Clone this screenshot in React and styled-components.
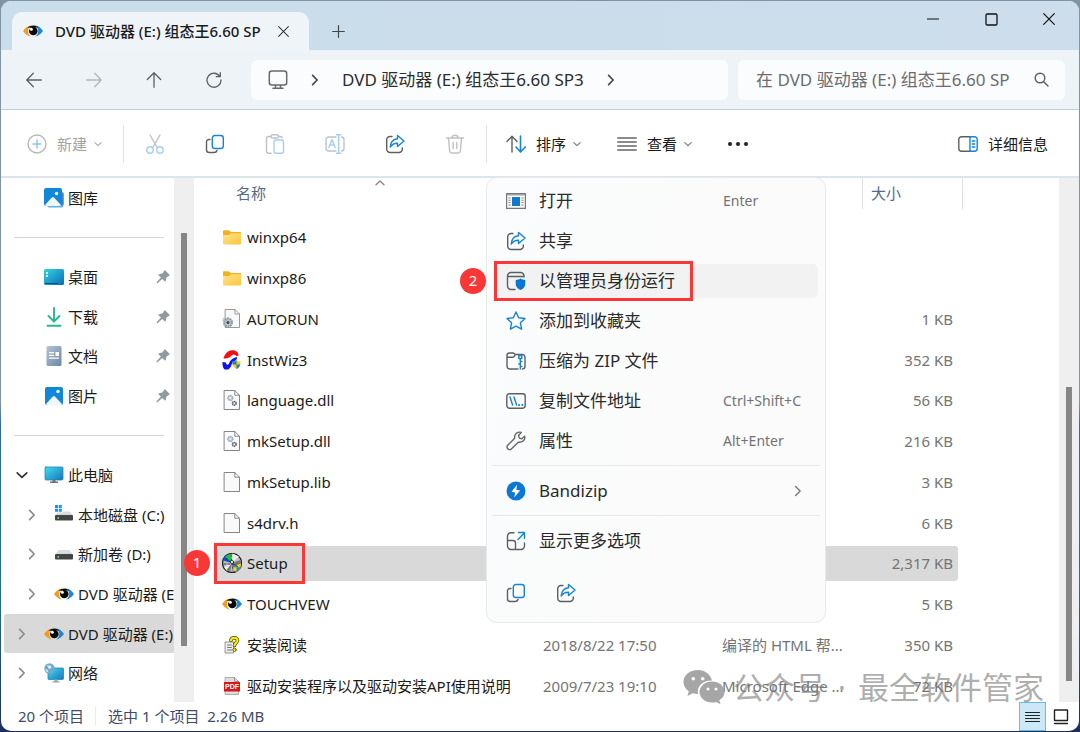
import React from "react";
import styled, { createGlobalStyle, css } from "styled-components";

const INK = "#5c5f62";
const BLUE = "#1583d8";
const RED = "#fa3737";

const GlobalStyle = createGlobalStyle`
  *, *::before, *::after { box-sizing: border-box; }
  body {
    margin: 0;
    background: linear-gradient(#8094a6 0%, #8094a6 55%, #2f6ca8 58%, #1f6f9f 80%, #1c2f5e 100%);
    font: 15px/20px "Noto Sans", "Noto Sans CJK SC", sans-serif;
    color: #1b1b1b;
  }
  button, input { font: inherit; color: inherit; }
`;

/* ---------- window frame ---------- */

const Desktop = styled.div`
  display: flex;
  min-height: 100vh;
  padding: 1px;
`;

const Window = styled.main`
  flex: 1;
  min-width: 0;
  display: flex;
  flex-direction: column;
  background: #fff;
  border-radius: 10px;
  overflow: hidden;
`;

const PlainButton = styled.button.attrs({ type: "button" })`
  display: flex;
  align-items: center;
  justify-content: center;
  padding: 0;
  border: 0;
  background: none;
`;

const TitleBar = styled.header`
  display: flex;
  height: 49px;
  background: linear-gradient(90deg, #c9ddea, #cdddec);
`;

const Tab = styled.div`
  align-self: flex-end;
  display: flex;
  align-items: center;
  width: 297px;
  height: 38px;
  margin-left: 11px;
  padding: 0 20px 0 11px;
  background: #eff4f9;
  border-radius: 10px 10px 0 0;
`;

const TabTitle = styled.span`
  flex: 1;
  margin-left: 12px;
  white-space: nowrap;
  overflow: hidden;
  font-weight: 500;
`;

const NewTab = styled(PlainButton)`
  width: 58px;
  padding-top: 12px;
`;

const WindowControls = styled.div`
  display: flex;
  margin: 0 1px 0 auto;
`;

const WindowControl = styled(PlainButton)`
  width: 58px;
  height: 36px;
`;

/* ---------- navigation ---------- */

const NavBar = styled.nav`
  display: flex;
  align-items: center;
  height: 60px;
  padding: 0 14px 0 3px;
  background: #eef3f8;
  border-bottom: 1px solid #bfd0dc;
`;

const NavButton = styled(PlainButton)`
  width: 60px;
  height: 40px;
  opacity: ${(p) => (p.disabled ? 0.4 : 1)};
`;

const Field = styled.div`
  display: flex;
  align-items: center;
  height: 40px;
  background: #fbfcfe;
  border-radius: 6px;
  font-size: 17px;
  white-space: nowrap;
`;

const Address = styled(Field)`
  flex: 477 1 477px;
  gap: 21px;
  margin-left: 7px;
  padding: 0 17px;
`;

const Crumb = styled(PlainButton)`
  color: #2c2c2c;
`;

const Search = styled(Field).attrs({ as: "label" })`
  flex: 327 1 327px;
  margin-left: 10px;
  padding: 0 16px 0 18px;
`;

const SearchInput = styled.input`
  flex: 1;
  width: 0;
  padding: 0;
  border: 0;
  outline: 0;
  background: none;
  &::placeholder { color: #6b6d70; opacity: 1; }
`;

/* ---------- command bar ---------- */

const CommandBar = styled.div`
  display: flex;
  align-items: center;
  height: 68px;
  padding-top: 1px;
  border-bottom: 2px solid #dde5ec;
`;

const Command = styled(PlainButton)`
  gap: 10px;
  height: 40px;
  padding: 0 18px;
  white-space: nowrap;
  color: ${(p) => (p.disabled ? "#a3a3a3" : "#1b1b1b")};
`;

const NewCommand = styled(Command)`
  padding: 0 20px 0 26px;
`;

const DropMark = styled.span`
  display: flex;
  margin-left: -3px;
`;

const IconCommand = styled(PlainButton)`
  width: 60px;
  height: 40px;
  opacity: ${(p) => (p.disabled ? 0.38 : 1)};
`;

const BarLine = styled.span`
  width: 1px;
  height: 38px;
  margin: 0 1px;
  background: #e4e4e4;
`;

const DetailsCommand = styled(Command)`
  margin-left: auto;
  padding: 0 31px 0 0;
`;

/* ---------- body ---------- */

const Body = styled.div`
  flex: 1;
  display: flex;
  min-height: 0;
`;

const Sidebar = styled.nav`
  display: grid;
  grid-auto-rows: 1fr;
  width: 173px;
  padding: 0 0 9px 3px;
`;

const SideLink = styled.a`
  display: flex;
  align-items: center;
  min-width: 0;
  padding-left: ${(p) => (p.$nested ? 22 : 12)}px;
  overflow: hidden;
  white-space: nowrap;
  text-decoration: none;
  color: #1b1b1b;
  border-radius: 3px 0 0 3px;
  background: ${(p) => (p.$selected ? "#d9d9d9" : "none")};
`;

const SideChevron = styled.span`
  display: flex;
  flex: none;
  width: 16px;
  margin-right: 12px;
`;

const SideIcon = styled.span`
  display: flex;
  align-items: center;
  justify-content: center;
  flex: none;
  width: 20px;
  margin-right: 4px;
`;

const PinSlot = styled.span`
  display: flex;
  margin: 0 4px 0 auto;
`;

const SideRule = styled.hr`
  width: 150px;
  height: 1px;
  margin: auto auto auto 10px;
  border: 0;
  background: #d4d7d8;
`;

const Track = styled.div`
  display: flex;
  justify-content: center;
  width: 20px;
  padding: ${(p) => p.$above}px 0 ${(p) => p.$below}px;
  background: #efefef;
`;

const Thumb = styled.span`
  width: 6px;
  background: #868686;
`;

const Main = styled.section`
  position: relative;
  flex: 1;
  min-width: 0;
  display: flex;
`;

const FileTable = styled.table`
  flex: 1;
  display: flex;
  flex-direction: column;
  min-width: 0;
  margin-left: 23px;
`;

const columns = css`
  display: grid;
  grid-template-columns: 316px 179px 150px 96px;
`;

const FileHead = styled.thead`
  tr {
    ${columns}
    height: 39px;
    align-items: start;
  }
`;

const HeadCell = styled.th`
  position: relative;
  height: 31px;
  padding: 5px 0 0 ${(p) => p.$inset || 8}px;
  text-align: left;
  font-weight: 400;
  color: #56698a;
  border-left: ${(p) => (p.$line ? "1px solid #dcdfe3" : "0")};
`;

const HeadEnd = styled(HeadCell)`
  border-right: 1px solid #dcdfe3;
  width: 101px;
`;

const SortMark = styled.span`
  position: absolute;
  top: 0;
  left: 50%;
  display: flex;
`;

const FileBody = styled.tbody`
  flex: 1;
  display: grid;
  grid-auto-rows: 1fr;
  margin-bottom: -4px;
`;

const FileRow = styled.tr`
  ${columns}
  justify-content: start;
  align-items: center;
  justify-self: start;
  position: relative;
  height: 35px;
  margin: auto 0;
  border-radius: 3px;
  background: ${(p) => (p.$selected ? "#d9d9d9" : "none")};
`;

const NameCell = styled.td`
  display: flex;
  align-items: center;
  padding: 0 0 0 5px;
  white-space: nowrap;
`;

const FileIcon = styled.span`
  display: flex;
  justify-content: center;
  width: 20px;
  margin-right: 5px;
`;

const MetaCell = styled.td`
  padding: 0 5px 0 10px;
  overflow: hidden;
  white-space: nowrap;
  text-align: ${(p) => (p.$right ? "right" : "left")};
  color: #747474;
`;

/* ---------- context menu ---------- */

const Menu = styled.div`
  position: absolute;
  top: -1px;
  left: 292px;
  z-index: 2;
  display: flex;
  flex-direction: column;
  gap: 6px;
  width: 340px;
  padding: 6px 7px 0;
  background: linear-gradient(100deg, #fafcfd, #fbfbfb 60%);
  border: 1px solid #e7e9ea;
  border-radius: 11px;
`;

const MenuItem = styled(PlainButton)`
  position: relative;
  justify-content: flex-start;
  height: 34px;
  padding: 0 12px;
  border-radius: 5px;
  font-size: 17px;
  color: #2a2a2a;
  background: ${(p) => (p.$active ? "#f2f2f2" : "none")};
`;

const MenuIcon = styled.span`
  display: flex;
  justify-content: center;
  width: 20px;
  margin-right: 13px;
`;

const Shortcut = styled.kbd`
  width: 83px;
  margin-left: auto;
  text-align: left;
  font: 14px/20px "Noto Sans", sans-serif;
  color: #737373;
`;

const Submenu = styled.span`
  display: flex;
  margin: 0 2px 0 auto;
`;

const MenuRule = styled.hr`
  width: auto;
  height: 1px;
  margin: 1px -2px 2px;
  border: 0;
  background: #e8e8e8;
`;

const MenuActions = styled.div`
  display: flex;
  gap: 30px;
  height: 58px;
  padding-left: 12px;
`;

/* ---------- step marks ---------- */

const StepFrame = styled.span`
  position: absolute;
  top: -3px;
  bottom: -3px;
  left: ${(p) => p.$left}px;
  width: ${(p) => p.$width}px;
  border: 3px solid ${RED};
`;

const StepNumber = styled.span`
  position: absolute;
  top: 50%;
  right: calc(100% + ${(p) => p.$gap}px);
  width: 26px;
  height: 26px;
  margin-top: -13px;
  border-radius: 50%;
  background: ${RED};
  color: #fff;
  font-size: 15px;
  line-height: 25px;
  text-align: center;
`;

/* ---------- footer ---------- */

const StatusBar = styled.footer`
  display: flex;
  align-items: center;
  height: 29px;
  padding-left: 17px;
  color: #3b4d6b;
`;

const StatusText = styled.span`
  padding-right: 11px;
  margin: 0 ${(p) => (p.$line ? 12 : 0)}px 2px 0;
  border-right: ${(p) => (p.$line ? "1px solid #ececec" : "0")};
`;

const ViewSwitch = styled.div`
  display: flex;
  align-self: stretch;
  gap: 1px;
  margin: 0 5px 0 auto;
`;

const ViewButton = styled(PlainButton)`
  width: 27px;
  border: 1px solid ${(p) => (p.$on ? "#66bbe6" : "transparent")};
  background: ${(p) => (p.$on ? "#cce8f7" : "none")};
`;

const Watermark = styled.div`
  position: absolute;
  right: 15px;
  bottom: -8px;
  z-index: 1;
  display: flex;
  align-items: center;
  white-space: nowrap;
  font-size: 31px;
  line-height: 46px;
  color: rgba(120, 120, 120, 0.6);
  pointer-events: none;
`;

const WatermarkLabel = styled.span`
  margin-left: 8px;
`;

const WatermarkDot = styled.span`
  width: 32px;
  text-align: center;
`;

/* ---------- icons ---------- */

const Svg = ({ w = 20, h = w, box, children, sw = 1.4, stroke = INK }) => (
  <svg width={w} height={h} viewBox={box || `0 0 ${w} ${h}`} fill="none" stroke={stroke}
    strokeWidth={sw} strokeLinecap="round" strokeLinejoin="round" aria-hidden="true">
    {children}
  </svg>
);

const Eye = () => (
  <Svg w={20} h={14} stroke="none">
    <path d="M0 7C2.500 3.500 5 1.800 8 1.500 6 2.800 5 4.500 5 7s1 4.200 3 5.500C4.500 12 2.500 10.300 0 7Z" fill="#f59b1c" />
    <path d="M20 7C17.500 3.500 15.500 1.800 12 1.500c2 1.300 3.200 3 3.200 5.500S14 11.200 12 12.500c3.300-.5 5.500-2.200 8-5.500Z" fill="#1f87d3" />
    <path d="M4.500 3.800C6.500 2.200 8.500 1.400 11 1.600c1.800.2 3.200.8 4.500 2" fill="#111" />
    <circle cx="10.300" cy="7" r="4.300" fill="#0a0a0a" />
    <circle cx="8.300" cy="5.300" r="1.500" fill="#fff" />
  </Svg>
);
const Close = ({ size = 12, color = "#333", sw = 1.1 }) => (
  <Svg w={size} box="0 0 12 12" stroke={color} sw={sw}><path d="m.7.7 10.600 10.600M11.300.7.7 11.300" /></Svg>
);
const Chevron = ({ dir = "right", size = 10, color = "#444", sw = 1.4 }) => (
  <Svg w={size} box="0 0 10 10" stroke={color} sw={sw}>
    <path d={{ right: "m3 1.200 3.800 3.800L3 8.800", down: "m1 3.200 4 3.800 4-3.800", up: "m1 6.800 4-3.800 4 3.800" }[dir]} />
  </Svg>
);
const Monitor = () => (
  <Svg w={20} h={20} sw={1.5} stroke="#66696c">
    <rect x="1.300" y="1" width="17.400" height="14" rx="2.500" /><path d="M7.500 15.500v2.500M12.500 15.500v2.500M5 18.300h10" />
  </Svg>
);
const Share = () => (
  <Svg>
    <path d="M7 2.500H5A3.300 3.300 0 0 0 1.700 5.800v9.400A3.300 3.300 0 0 0 5 18.500h9a3.300 3.300 0 0 0 3.300-3.300V14" />
    <path d="M12.500 1.500 19 7l-6.500 5.500V9.300c-3.300-.2-5.300 1-7.300 3.700.3-5 2.800-7.800 7.300-8.300Z" stroke={BLUE} />
  </Svg>
);
const Copy = () => (
  <Svg>
    <path d="M5 5.500H4A2.500 2.500 0 0 0 1.500 8v7.700A2.800 2.800 0 0 0 4.300 18.500H9c1.500 0 2.700-.8 3-2" />
    <rect x="7.300" y="1.500" width="11" height="13" rx="2.600" stroke={BLUE} />
  </Svg>
);
const Cut = () => (
  <Svg><path d="m5 1 7.500 13M15 1 7.500 14" /><circle cx="5" cy="16" r="3.200" stroke={BLUE} /><circle cx="15" cy="16" r="3.200" stroke={BLUE} /></Svg>
);
const Paste = () => (
  <Svg>
    <path d="M6 2.500H3.500a2 2 0 0 0-2 2v12.800a2 2 0 0 0 2 2H6M14 2.500h1.500c1 0 1.500.7 1.500 1.500" />
    <rect x="6" y=".8" width="7.500" height="3.200" rx="1.600" /><rect x="9" y="6" width="9.500" height="13.300" rx="2" stroke={BLUE} />
  </Svg>
);
const Rename = () => (
  <Svg>
    <path d="M11 3H3.500A2.500 2.500 0 0 0 1 5.500v9A2.500 2.500 0 0 0 3.500 17H11M16.500 3a2.500 2.500 0 0 1 2.500 2.500v9a2.500 2.500 0 0 1-2.500 2.500" />
    <path d="M3.800 13.500 7 5.500l3.200 8M4.900 11h4.200M13.700 1v18M11.500 .8h4.400M11.500 19.200h4.400" stroke={BLUE} />
  </Svg>
);
const Trash = () => (
  <Svg><path d="M1.500 4h17M7 3.500c0-3 6-3 6 0M3.500 4.500l1.200 12.700a2 2 0 0 0 2 1.800h6.600a2 2 0 0 0 2-1.800l1.200-12.700M8.200 8.500v6M11.800 8.500v6" /></Svg>
);
const Sort = () => (
  <Svg><path d="M6 18V2.500M1 7.500l5-5.300 5 5.300" /><path d="M14.500 2v15.500M10 13l4.500 5 4.800-5" stroke={BLUE} strokeWidth="1.600" /></Svg>
);
const Lines = ({ w = 20, color = "#666", h = 16, sw = 1.3 }) => (
  <Svg w={w} h={h} box="0 0 20 16" stroke={color} sw={sw}><path d="M.7 2h18.600M.7 6h18.600M.7 10h18.600M.7 14h18.600" /></Svg>
);
const Details = () => (
  <Svg w={20} h={16}>
    <path d="M12 .8H3.500A2.700 2.700 0 0 0 .8 3.500v9a2.700 2.700 0 0 0 2.700 2.700H12" />
    <path d="M12 .8h4.500a2.700 2.700 0 0 1 2.700 2.700v9a2.700 2.700 0 0 1-2.700 2.700H12ZM14.300 5h2.500M14.300 8h2.500M14.300 11h2.500" stroke={BLUE} />
  </Svg>
);
const Pin = () => (
  <Svg w={14} h={14} stroke="none">
    <path d="M8 .9c.5-.7 1-.7 1.600-.1l3.600 3.600c.6.600.5 1.100-.2 1.500l-2.400 1.300-.8 3.600c-.2.700-.7.9-1.200.4L6.200 8.900 1.300 13.400.4 12.600 4.900 7.600 2.700 5.400c-.5-.5-.3-1.100.4-1.200l3.600-.9Z" fill="#8f9ba3" />
  </Svg>
);

const Picture = ({ stacked }) => (
  <Svg w={20} stroke="none">
    {stacked && <path d="M3 17.500h13.500V3.500l2 1c.8.500 1 1 1 1.800v11c0 1.600-.6 2.200-2 2.200H5.300c-1.300 0-2-.7-2.300-2Z" fill="#63b0e3" />}
    {stacked && <path d="M18.500 4c.8.500 1 1 1 2v9.500c0 1-.5 1.500-1.200 1.500Z" fill="#2c62b5" />}
    <rect x={stacked ? 0 : 1} y={stacked ? 0 : 1} width="18" height="18" rx="2" fill="#1187d7" />
    <path d={stacked ? "m1 17 6.800-7.500c.7-.7 1.500-.7 2.200 0L17 17c-.5.700-1 1-2 1H3c-1 0-1.600-.3-2-1Z" : "m2 18 6.800-7.500c.7-.7 1.500-.7 2.200 0L18 18c-.5.600-1 1-2 1H4c-1 0-1.600-.3-2-1Z"} fill="#eff7fd" />
    <circle cx={stacked ? 12.500 : 14} cy="5.500" r="1.700" fill="#eaf6ff" />
  </Svg>
);
const DesktopIcon = () => (
  <Svg w={20} h={16} stroke="none">
    <defs><linearGradient id="desk" x1="0" y1="0" x2="1" y2="1"><stop stopColor="#35d4dd" /><stop offset="1" stopColor="#096bb9" /></linearGradient></defs>
    <rect width="20" height="16" rx="1.500" fill="url(#desk)" />
    <path d="M2 3h2v2H2zM2 6h2v2H2z" fill="#d9f7fb" /><path d="M1 14h13v1H1z" fill="#07507f" />
  </Svg>
);
const Download = () => (
  <Svg w={16} h={20} stroke="#26b88f" sw={1.9}><path d="M8 1v13M2.500 9 8 14.500 13.500 9M1.500 18.700h13" /></Svg>
);
const DocumentIcon = () => (
  <Svg w={16} h={20} stroke="none">
    <defs><linearGradient id="docu" x1="0" y1="0" x2="1" y2="1"><stop stopColor="#b4c4d5" /><stop offset="1" stopColor="#6c86a5" /></linearGradient></defs>
    <rect x=".5" width="15" height="20" rx="1.500" fill="url(#docu)" />
    <path d="M3 6h5v1.300H3zM3 8.700h5V10H3zM3 11.400h10v1.300H3zM9.500 6H13v4H9.500z" fill="#fff" />
  </Svg>
);
const Computer = () => (
  <Svg w={20} h={18} stroke="none">
    <rect x="1" y="1" width="18" height="13" rx="1" fill="url(#pc)" stroke="#2687ae" strokeWidth=".8" />
    <defs><linearGradient id="pc" x1="0" y1="0" x2="1" y2="1"><stop stopColor="#43dcec" /><stop offset="1" stopColor="#1377bc" /></linearGradient></defs>
    <path d="M8.500 14h3v1.500h-3zM6 15.600h8v1.400H6z" fill="#69767f" />
  </Svg>
);
const Drive = ({ system }) => (
  <Svg w={20} h={20} stroke="none">
    {system && <path d="M1 0h3v3H1zM4.800 0h3v3h-3zM1 3.800h3v3H1zM4.800 3.800h3v3h-3z" fill="#1696e5" />}
    <path d={system ? "M8.500 6.500h7.500l2.800 3.500H1.500l2-2.500h5Z" : "M4.500 6h11l3 4h-17Z"} fill="#dadddf" />
    <rect x="1" y="10" width="18" height="5.500" rx="1" fill="#454545" /><path d="M3.500 12h1.500v2H3.500z" fill="#55d36a" />
  </Svg>
);
const Network = () => (
  <Svg w={20} h={20} stroke="none">
    <rect x="4" y="5" width="15.500" height="11.500" rx=".8" fill="url(#pc)" stroke="#2687ae" strokeWidth=".8" />
    <circle cx="5.500" cy="5.500" r="5.200" fill="#6fa9cd" /><path d="M3 2.500c2-1 2 1 4 0 1 2 0 3-1.500 3.500-1.500 0-1-2-2.500-3.500ZM1.500 6c1.500 0 2.500 1.500 3 3.500-2-.3-3-1.800-3-3.500Z" fill="#d5edf6" />
    <path d="M10.500 16.500h3v1.700h2V19.500h-7v-1.300h2z" fill="#98a6ae" />
  </Svg>
);

const Folder = () => (
  <Svg w={18} h={15} stroke="none">
    <defs><linearGradient id="fold" x1="0" y1="0" x2="1" y2="1"><stop stopColor="#ffe590" /><stop offset="1" stopColor="#fdc43a" /></linearGradient></defs>
    <path d="M0 1.500C0 .7.500.3 1.200.3h4.300L8 2h9c.7 0 1 .4 1 1v3H0Z" fill="#f3b118" />
    <path d="M0 5h6l2-1.700h10v10c0 .7-.4 1.200-1 1.200H1c-.6 0-1-.5-1-1.200Z" fill="url(#fold)" />
  </Svg>
);
const Page = ({ children }) => (
  <Svg w={18} h={20} stroke="#858585" sw={1}>
    <path d="M1.500.5h10.300l4.700 4.700v14.300h-15ZM11.800.5v4.700h4.700" fill="#fafafa" strokeLinejoin="miter" />
    {children}
  </Svg>
);
const GearPage = () => (
  <Page>
    <circle cx="7.300" cy="8" r="2.300" fill="#e4e9ed" stroke="#9aa8b4" strokeWidth="1.800" strokeDasharray="1.400 .5" strokeLinecap="butt" />
    <circle cx="11.300" cy="13.300" r="1.800" stroke="#5d6770" strokeWidth="1.700" strokeDasharray="1.400 .4" strokeLinecap="butt" />
  </Page>
);
const Autorun = () => (
  <Svg w={20} h={20} sw={1} stroke="#999">
    <path d="M3.500.5H13l4.500 4.500v13.500H3.500ZM13 .5V5h4.500" fill="#f8f8f8" />
    <circle cx="6" cy="13.500" r="4" fill="#bfc8cd" stroke="#84949e" strokeWidth="2" strokeDasharray="1.700 .8" strokeLinecap="butt" />
    <circle cx="3" cy="11" r="2" stroke="#a3b0b8" strokeWidth="1.200" strokeDasharray="1.200 .5" strokeLinecap="butt" />
    <circle cx="6" cy="13.500" r="1.500" fill="#344c5b" stroke="none" />
  </Svg>
);
const InstWiz = () => (
  <Svg w={20} h={20} stroke="none">
    <path d="M1.500 8.500C2.500 4.500 5.500.5 10 .3c4-.2 6.500 2 6.500 5.200l-2 .8c-1-2-3.500-2.600-5-.8C8.500 7 6 9 1.500 8.500Z" fill="#f50d12" />
    <path d="M14.500 7c1.500 1.500-.5 3.500-2.500 4.500s-2.500 3-3 5L6.500 19.500h-4C.8 18 .3 15 .5 12l3.500.5c0 2.500 2 3 3 1 1.500-3.500 2.500-4.500 7.500-6.500Z" fill="#0e13ef" />
    <path d="M10.500 11.500c2 0 3-.5 4-1.500 1 1 2 1.500 4 1.500 0 4-1 6-4 7.500-3-1.500-4-3.500-4-7.500Z" fill="#fbc721" />
    <path d="M14.500 10v4.500h-4v-3c2 0 3-.5 4-1.500ZM14.500 14.500h3.700c-.5 2-1.700 3.500-3.700 4.500Z" fill="#1b80c7" />
  </Svg>
);
const Disc = () => (
  <Svg w={20} h={20} stroke="none">
    <circle cx="10" cy="10" r="9.500" fill="#bdbdbd" stroke="#222" strokeDasharray="2 1" />
    <path d="M10 10 1 7.500C1.500 4.500 3 2.500 5.500 1.500Z" fill="#1450e0" /><path d="M10 10 3 3.500 8 .7Z" fill="#10c833" />
    <path d="M10 10 10.500.5 17 3.500ZM10 10 2 14l3 4Z" fill="#eee" /><path d="m10 10 8.500-3v5ZM10 10l-2 9-3.500-2Z" fill="#777" />
    <path d="M10.500 11c2 0 3-.5 4-1.300 1 .8 2 1.300 4.500 1.300 0 4-1.500 6.500-4.500 8-3-1.500-4-4-4-8Z" fill="#f8cc28" />
    <path d="M14.500 9.700v4.600h-4V11c2 0 3-.5 4-1.300ZM14.500 14.300h3.800c-.6 2-1.800 3.700-3.800 4.700Z" fill="#2489cf" />
    <path d="M4 6l12 8M9 2l2 16M2 11h16" stroke="#222" strokeWidth=".8" strokeDasharray="2 2" /><circle cx="10" cy="9" r="1.600" fill="#fff" stroke="#222" strokeWidth=".8" />
  </Svg>
);
const Help = () => (
  <Svg w={18} h={18} stroke="none">
    <path d="M2.500 6h8v11h-8z" fill="#eee" stroke="#888" strokeWidth=".9" /><path d="M4.500 9h4M4.500 11.500h4M4.500 14h4" stroke="#777" strokeWidth="1" />
    <path d="M8 4.500C8 1 14.500 1 14.500 4.300c0 2.500-3 2.700-3 5.200" stroke="#4b4700" strokeWidth="3.600" /><path d="M8 4.500C8 1 14.500 1 14.500 4.300c0 2.500-3 2.700-3 5.200" stroke="#f5ea16" strokeWidth="2.200" />
    <circle cx="11.500" cy="13.800" r="1.700" fill="#f5ea16" stroke="#4b4700" strokeWidth=".8" />
  </Svg>
);
const PdfText = styled.text`
  font: 700 7px "Liberation Sans", sans-serif;
`;
const Pdf = () => (
  <Svg w={18} h={18} stroke="none">
    <path d="M2.500.5h9l4 4v13h-13Z" fill="#ddd" stroke="#999" strokeWidth=".8" /><path d="M11.500.5v4h4" stroke="#888" strokeWidth=".8" />
    <rect x="1" y="5" width="16" height="9.500" fill="#d9151c" /><PdfText x="9" y="12.300" textAnchor="middle" fill="#fff">PDF</PdfText>
  </Svg>
);

const OpenApp = () => (
  <Svg w={20} h={16} stroke="none">
    <rect x=".6" y=".6" width="18.800" height="14.800" fill="#fbfbfb" stroke="#777" strokeWidth="1.200" /><path d="M1 1h18v1.500H1z" fill="#9da2a6" />
    <rect x="6" y="4" width="8" height="9" fill="#0f78cf" /><path d="M3.500 4.500v8M16.500 4.500v8" stroke="#8a8a8a" strokeWidth="2.200" strokeDasharray="1 1.300" strokeLinecap="butt" />
  </Svg>
);
const Admin = () => (
  <Svg>
    <path d="M9 18.500H5A3.500 3.500 0 0 1 1.500 15V5A3.500 3.500 0 0 1 5 1.500h9.500A3.500 3.500 0 0 1 18 5v1M1.500 5.500h16" />
    <path d="M14.500 7.500c1.500 1 2.700 1.400 4.800 1.500v3.500c0 3.200-1.800 5.300-4.800 6.500-3-1.200-4.800-3.300-4.800-6.500V9c2.100-.1 3.300-.5 4.800-1.500Z" fill="#0877d2" stroke="none" />
  </Svg>
);
const Star = () => (
  <Svg stroke={BLUE}><path d="m10 1 2.700 5.700 6.300.8-4.600 4.300 1.200 6.400-5.600-3.100-5.600 3.100 1.200-6.400L1 7.500l6.300-.8Z" /></Svg>
);
const Zip = () => (
  <Svg>
    <path d="M12 18H3.800A2.800 2.800 0 0 1 1 15.200V4.500A2.500 2.500 0 0 1 3.500 2H7c1.300 0 1.700 1.500 3 1.500h6.200A2.800 2.800 0 0 1 19 6.300v8.900A2.800 2.800 0 0 1 16.500 18M1 6.200h6c1.500 0 1.500-2.700 3-2.700" />
    <path d="M12.800 4.500h3v3h-3zM14.300 8v10M14.300 10.500h1.500M14.300 13h-1.500M14.300 15.500h1.500" stroke={BLUE} />
  </Svg>
);
const PathIcon = () => (
  <Svg w={20} h={16}>
    <rect x=".8" y=".8" width="18.400" height="14.400" rx="2.600" /><path d="m4 4 2.600 8M8 4l2.600 8" stroke={BLUE} /><path d="M13 12h.1M16.300 12h.1" stroke={BLUE} strokeWidth="2" />
  </Svg>
);
const Wrench = () => (
  <Svg stroke="#666"><path d="M18.700 5.200 15.700 7.700l-2.400-.6-.8-2.600L15.300 1.400C11.500.3 8 3 8.700 7.300L1.700 14.300c-1.400 1.600-.4 4 1.600 4.300.8.100 1.500-.2 2-.7l7-6.700c4 .6 7.200-2.200 6.400-6Z" /></Svg>
);
const Bandizip = () => (
  <Svg stroke="none"><circle cx="10" cy="10" r="9.500" fill="#0c78d6" /><path d="M11 3.800 5.500 10.700l3.700.7-1 5 5.900-6.900-3.800-.7Z" fill="#fff" /></Svg>
);
const More = () => (
  <Svg>
    <path d="M8 1.700H5A3.500 3.500 0 0 0 1.500 5.200V15A3.500 3.500 0 0 0 5 18.500h10a3.500 3.500 0 0 0 3.500-3.500v-3M1.500 9.500H7A2.500 2.500 0 0 1 9.500 12v6.500" />
    <path d="m12 8.500 6.500-6.700M12.500 1.500h6v6" stroke={BLUE} />
  </Svg>
);
const WeChat = () => (
  <Svg w={42} h={36} stroke="none">
    <path d="M15 1C6.500 1 .5 6.300.5 13c0 4 2 7 5.300 9.300L4.500 27l5.300-2.800c1.600.5 3.300.7 5.200.7-1.500-7 4.500-13.500 14-13.300C27.500 5.500 22 1 15 1Z" fill="#a6a6a6" />
    <path d="M29 12.500c-7 0-12.500 4.700-12.500 10.500S22 33.500 29 33.500c1.400 0 2.900-.2 4.200-.6l4.300 2.400-1.200-4c3.200-2 5.200-5 5.200-8.300 0-5.800-5.500-10.500-12.500-10.500Z" fill="#a6a6a6" />
    <g fill="#fff"><circle cx="10.300" cy="9.700" r="1.800" /><circle cx="19.700" cy="9.700" r="1.800" /><circle cx="25" cy="20" r="1.500" /><circle cx="33" cy="20" r="1.500" /></g>
  </Svg>
);

/* ---------- data ---------- */

const sideItems = [
  { label: "图库", icon: <Picture stacked /> },
  { rule: true, label: "r1" },
  { label: "桌面", icon: <DesktopIcon />, pin: true },
  { label: "下载", icon: <Download />, pin: true },
  { label: "文档", icon: <DocumentIcon />, pin: true },
  { label: "图片", icon: <Picture />, pin: true },
  { rule: true, label: "r2" },
  { label: "此电脑", icon: <Computer />, open: true },
  { label: "本地磁盘 (C:)", icon: <Drive system />, nested: true },
  { label: "新加卷 (D:)", icon: <Drive />, nested: true },
  { label: "DVD 驱动器 (E:)", id: "e-nested", icon: <Eye />, nested: true },
  { label: "DVD 驱动器 (E:)", icon: <Eye />, selected: true },
  { label: "网络", icon: <Network /> },
];

const files = [
  { name: "winxp64", icon: <Folder /> },
  { name: "winxp86", icon: <Folder /> },
  { name: "AUTORUN", icon: <Autorun />, size: "1 KB" },
  { name: "InstWiz3", icon: <InstWiz />, size: "352 KB" },
  { name: "language.dll", icon: <GearPage />, size: "56 KB" },
  { name: "mkSetup.dll", icon: <GearPage />, size: "216 KB" },
  { name: "mkSetup.lib", icon: <Page />, size: "3 KB" },
  { name: "s4drv.h", icon: <Page />, size: "6 KB" },
  { name: "Setup", icon: <Disc />, size: "2,317 KB", selected: true },
  { name: "TOUCHVEW", icon: <Eye />, size: "5 KB" },
  { name: "安装阅读", icon: <Help />, date: "2018/8/22 17:50", type: "编译的 HTML 帮...", size: "350 KB" },
  { name: "驱动安装程序以及驱动安装API使用说明", icon: <Pdf />, date: "2009/7/23 19:10", type: "Microsoft Edge ...", size: "72 KB" },
];

const menuItems = [
  { label: "打开", icon: <OpenApp />, keys: "Enter" },
  { label: "共享", icon: <Share /> },
  { label: "以管理员身份运行", icon: <Admin />, active: true },
  { label: "添加到收藏夹", icon: <Star /> },
  { label: "压缩为 ZIP 文件", icon: <Zip /> },
  { label: "复制文件地址", icon: <PathIcon />, keys: "Ctrl+Shift+C" },
  { label: "属性", icon: <Wrench />, keys: "Alt+Enter" },
];

/* ---------- parts ---------- */

function SideEntry({ item }) {
  if (item.rule) return <SideRule />;
  const expandable = !item.pin && item.label !== "图库";
  return (
    <SideLink href="#" $nested={item.nested} $selected={item.selected}>
      <SideChevron>
        {expandable && <Chevron dir={item.open ? "down" : "right"} size={12} color={item.open ? "#333" : "#8a8a8a"} />}
      </SideChevron>
      <SideIcon>{item.icon}</SideIcon>
      {item.label}
      {item.pin && <PinSlot><Pin /></PinSlot>}
    </SideLink>
  );
}

function Step({ number, left, width, gap }) {
  return <StepFrame $left={left} $width={width}><StepNumber $gap={gap}>{number}</StepNumber></StepFrame>;
}

function Drop({ color = "#777" }) {
  return <DropMark><Chevron dir="down" size={8} color={color} /></DropMark>;
}

export default function App() {
  return (
    <Desktop>
      <GlobalStyle />
      <Window>
        <TitleBar>
          <Tab>
            <Eye />
            <TabTitle>DVD 驱动器 (E:) 组态王6.60 SP</TabTitle>
            <PlainButton aria-label="关闭标签页"><Close size={11} /></PlainButton>
          </Tab>
          <NewTab aria-label="新建标签页"><Svg w={13} sw={1.2} stroke="#444"><path d="M6.500.7v11.600M.7 6.500h11.600" /></Svg></NewTab>
          <WindowControls>
            <WindowControl aria-label="最小化"><Svg w={12} stroke="#111" sw={1.2}><path d="M0 6h12" /></Svg></WindowControl>
            <WindowControl aria-label="最大化"><Svg w={13} stroke="#111" sw={1.3}><rect x="1" y="1" width="11" height="11" rx="1.300" /></Svg></WindowControl>
            <WindowControl aria-label="关闭"><Close size={12} color="#111" sw={1.2} /></WindowControl>
          </WindowControls>
        </TitleBar>

        <NavBar>
          <NavButton aria-label="后退"><Svg w={16} sw={1.3}><path d="M15.300 8H1M7.300 1.300.8 8l6.500 6.700" /></Svg></NavButton>
          <NavButton aria-label="前进" disabled><Svg w={16} sw={1.3}><path d="M.7 8H15M8.700 1.300 15.200 8l-6.500 6.700" /></Svg></NavButton>
          <NavButton aria-label="向上"><Svg w={16} sw={1.3}><path d="M8 15.300V1M1.300 7.500 8 .8l6.700 6.700" /></Svg></NavButton>
          <NavButton aria-label="刷新"><Svg w={16} sw={1.3}><path d="M13.800 4.300A7 7 0 1 0 15 8M14.300.7v4h-4" /></Svg></NavButton>
          <Address>
            <Monitor />
            <Chevron size={12} />
            <Crumb>DVD 驱动器 (E:) 组态王6.60 SP3</Crumb>
            <Chevron size={12} />
          </Address>
          <Search>
            <SearchInput type="text" placeholder="在 DVD 驱动器 (E:) 组态王6.60 SP" aria-label="搜索" />
            <Svg w={15}><circle cx="6" cy="6" r="4.800" /><path d="m9.700 9.700 4.300 4.300" /></Svg>
          </Search>
        </NavBar>

        <CommandBar>
          <NewCommand disabled>
            <Svg stroke="#b9b9b9"><circle cx="10" cy="10" r="9" /><path d="M10 6v8M6 10h8" stroke="#86c3ee" /></Svg>
            新建
            <Drop color="#aaa" />
          </NewCommand>
          <BarLine />
          <IconCommand disabled aria-label="剪切"><Cut /></IconCommand>
          <IconCommand aria-label="复制"><Copy /></IconCommand>
          <IconCommand disabled aria-label="粘贴"><Paste /></IconCommand>
          <IconCommand disabled aria-label="重命名"><Rename /></IconCommand>
          <IconCommand aria-label="共享"><Share /></IconCommand>
          <IconCommand disabled aria-label="删除"><Trash /></IconCommand>
          <BarLine />
          <Command><Sort />排序<Drop /></Command>
          <Command><Lines />查看<Drop /></Command>
          <Command aria-label="更多">
            <Svg w={20} h={6} stroke="none"><g fill="#222"><circle cx="2" cy="3" r="2" /><circle cx="10" cy="3" r="2" /><circle cx="18" cy="3" r="2" /></g></Svg>
          </Command>
          <DetailsCommand><Details />详细信息</DetailsCommand>
        </CommandBar>

        <Body>
          <Sidebar>
            {sideItems.map((item) => <SideEntry key={item.id || item.label} item={item} />)}
          </Sidebar>
          <Track $above={55} $below={56}><Thumb /></Track>
          <Main>
            <FileTable>
              <FileHead>
                <tr>
                  <HeadCell $inset={19}>名称<SortMark><Chevron dir="up" size={10} color="#888" /></SortMark></HeadCell>
                  <HeadCell $line aria-label="修改日期" />
                  <HeadCell $line aria-label="类型" />
                  <HeadEnd $line>大小</HeadEnd>
                </tr>
              </FileHead>
              <FileBody>
                {files.map((file) => (
                  <FileRow key={file.name} $selected={file.selected}>
                    <NameCell>
                      <FileIcon>{file.icon}</FileIcon>
                      {file.name}
                      {file.selected && <Step number={1} left={-3} width={91} gap={7} />}
                    </NameCell>
                    <MetaCell>{file.date}</MetaCell>
                    <MetaCell>{file.type}</MetaCell>
                    <MetaCell $right>{file.size}</MetaCell>
                  </FileRow>
                ))}
              </FileBody>
            </FileTable>

            <Menu role="menu">
              {menuItems.map((item) => (
                <MenuItem key={item.label} role="menuitem" $active={item.active}>
                  <MenuIcon>{item.icon}</MenuIcon>
                  {item.label}
                  {item.keys && <Shortcut>{item.keys}</Shortcut>}
                  {item.active && <Step number={2} left={0} width={199} gap={11} />}
                </MenuItem>
              ))}
              <MenuRule />
              <MenuItem role="menuitem">
                <MenuIcon><Bandizip /></MenuIcon>Bandizip
                <Submenu><Chevron size={12} color="#777" sw={1.1} /></Submenu>
              </MenuItem>
              <MenuRule />
              <MenuItem role="menuitem"><MenuIcon><More /></MenuIcon>显示更多选项</MenuItem>
              <MenuActions>
                <PlainButton aria-label="复制"><Copy /></PlainButton>
                <PlainButton aria-label="共享"><Share /></PlainButton>
              </MenuActions>
            </Menu>

            <Watermark>
              <WeChat />
              <WatermarkLabel>公众号</WatermarkLabel>
              <WatermarkDot>·</WatermarkDot>
              <span>最全软件管家</span>
            </Watermark>
          </Main>
          <Track $above={209} $below={21}><Thumb /></Track>
        </Body>

        <StatusBar>
          <StatusText $line>20 个项目</StatusText>
          <StatusText>选中 1 个项目&nbsp; 2.26 MB</StatusText>
          <ViewSwitch>
            <ViewButton $on aria-label="详细信息视图"><Lines w={15} h={14} color="#222" sw={1.6} /></ViewButton>
            <ViewButton aria-label="大图标视图">
              <Svg w={16} h={16} stroke="#222"><rect x="1.500" y="1" width="13" height="10.500" /><path d="M1.500 14.500h13" /></Svg>
            </ViewButton>
          </ViewSwitch>
        </StatusBar>
      </Window>
    </Desktop>
  );
}
